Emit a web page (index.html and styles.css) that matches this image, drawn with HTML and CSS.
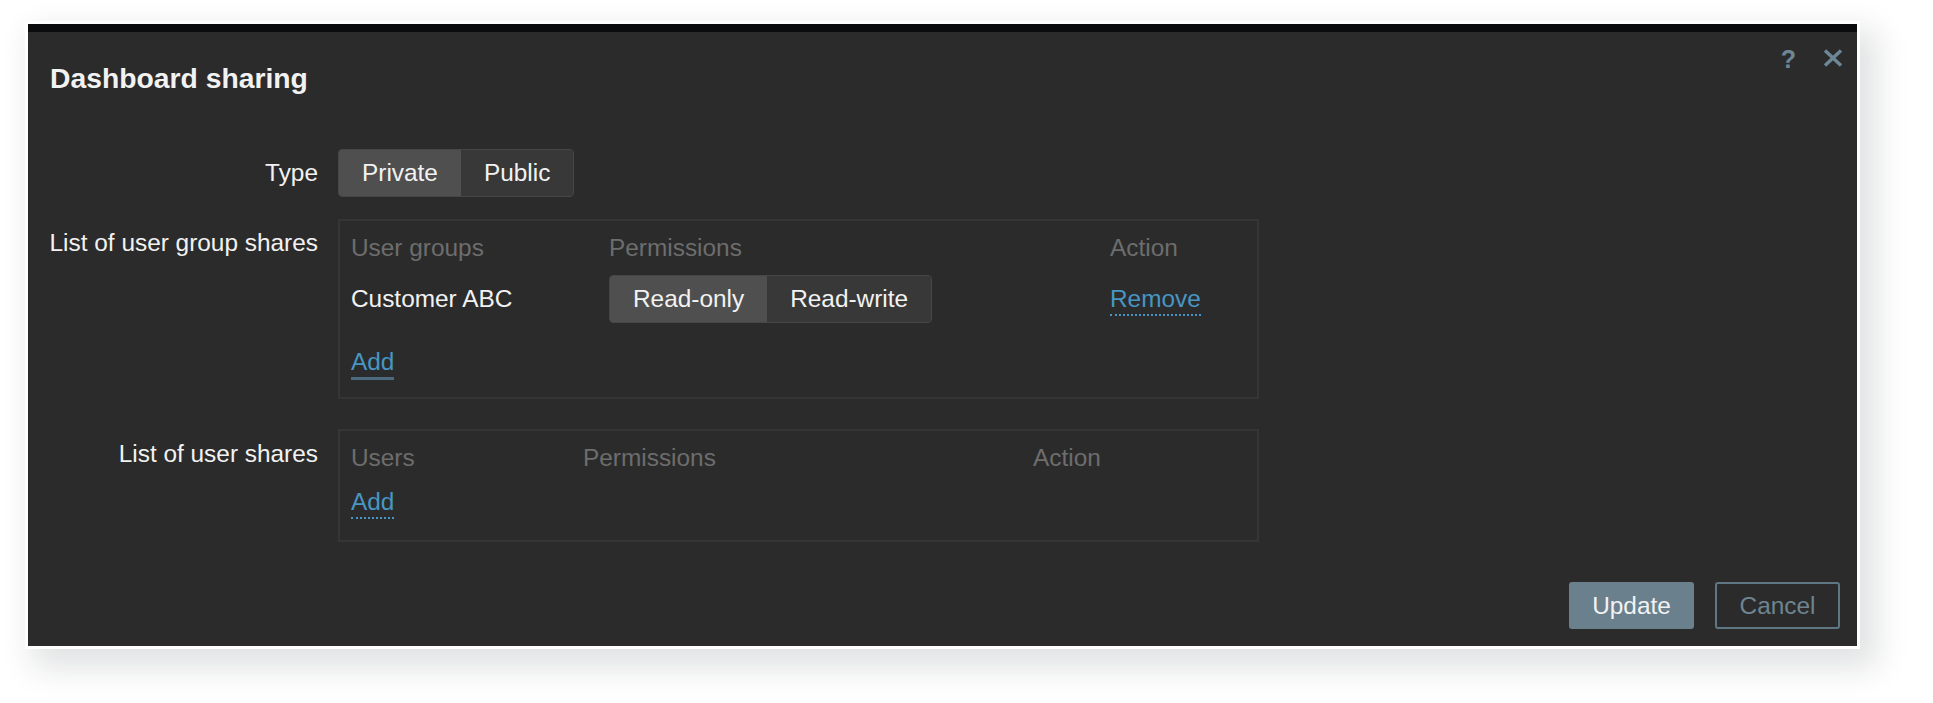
FILE: index.html
```html
<!DOCTYPE html>
<html lang="en">
<head>
<meta charset="utf-8">
<title>Dashboard sharing</title>
<link rel="stylesheet" href="styles.css">
</head>
<body>
<div class="dialog">
  <div class="head">
    <h4 class="title">Dashboard sharing</h4>
    <div class="tools">
      <span class="help">?</span>
      <svg class="close" width="20" height="18" viewBox="0 0 20 18" aria-label="Close">
        <path d="M2 1.5 L18 16.5 M18 1.5 L2 16.5" stroke="#6e8796" stroke-width="3.4" fill="none"/>
      </svg>
    </div>
  </div>

  <div class="form">
    <div class="row row-type">
      <div class="lbl lbl-center">Type</div>
      <div class="field">
        <div class="seg">
          <span class="seg-item on">Private</span><span class="seg-item">Public</span>
        </div>
      </div>
    </div>

    <div class="row row-groups">
      <div class="lbl lbl-top">List of user group shares</div>
      <div class="box box-groups">
        <div class="th">User groups</div>
        <div class="th">Permissions</div>
        <div class="th">Action</div>
        <div class="td td-mid">Customer ABC</div>
        <div class="td">
          <div class="seg">
            <span class="seg-item on">Read-only</span><span class="seg-item">Read-write</span>
          </div>
        </div>
        <div class="td td-mid"><a class="link dotted" href="#">Remove</a></div>
        <div class="td add-row"><a class="link solid" href="#">Add</a></div>
      </div>
    </div>

    <div class="row row-users">
      <div class="lbl lbl-top2">List of user shares</div>
      <div class="box box-users">
        <div class="th">Users</div>
        <div class="th">Permissions</div>
        <div class="th">Action</div>
        <div class="td add-row2"><a class="link dotted" href="#">Add</a></div>
      </div>
    </div>
  </div>

  <div class="footer">
    <button class="btn btn-primary" type="button">Update</button>
    <button class="btn btn-alt" type="button">Cancel</button>
  </div>
</div>
</body>
</html>
```

FILE: styles.css
```css
html, body {
  margin: 0;
  padding: 0;
  background: #ffffff;
}

body {
  font-family: "Liberation Sans", Arial, sans-serif;
  width: 1933px;
  height: 703px;
  overflow: hidden;
}

.dialog {
  margin: 24px 0 0 28px;
  width: 1829px;
  background: #2b2b2b;
  border-top: 8px solid #0b0c0d;
  box-shadow: 0 0 0 3px #ffffff, 12px 14px 30px 8px rgba(20, 30, 40, 0.13);
  color: #f2f2f2;
  font-size: 24.4px;
}

/* header */
.head {
  display: flex;
  align-items: flex-start;
  padding: 13px 14px 0 22px;
}

.title {
  margin: 17px 0 0;
  font-size: 28.3px;
  font-weight: bold;
  line-height: 32px;
  color: #f2f2f2;
}

.tools {
  margin-left: auto;
  display: flex;
  align-items: flex-start;
}

.help {
  font-size: 25px;
  font-weight: bold;
  line-height: 28px;
  color: #6e8796;
}

.close {
  display: block;
  margin: 4px 0 0 27px;
}

/* form */
.form {
  margin-top: 55px;
  padding-left: 10px;
}

.row {
  display: grid;
  grid-template-columns: 280px 921px;
  column-gap: 20px;
}

.row-groups {
  margin-top: 22px;
}

.row-users {
  margin-top: 30px;
}

.lbl {
  text-align: right;
  line-height: 28px;
  white-space: nowrap;
  color: #f2f2f2;
}

.lbl-center {
  align-self: center;
}

.lbl-top {
  padding-top: 10px;
}

.lbl-top2 {
  padding-top: 11px;
}

/* segmented radio control */
.seg {
  display: inline-flex;
  height: 48px;
  box-sizing: border-box;
  border: 1px solid #474747;
  border-radius: 4px;
  overflow: hidden;
  background: #383838;
}

.seg-item {
  padding: 0 23px;
  line-height: 46px;
  color: #f2f2f2;
  background: #383838;
  text-align: center;
}

.seg-item.on {
  background: #4f4f4f;
}

/* share tables */
.box {
  box-sizing: border-box;
  border: 2px solid #353535;
  display: grid;
  align-content: start;
}

.box-groups {
  height: 180px;
  padding: 13px 11px 21px;
  grid-template-columns: 258px 501px auto;
}

.box-users {
  height: 113px;
  padding: 13px 11px 24px;
  grid-template-columns: 232px 450px auto;
}

.th {
  line-height: 28px;
  color: #6d6d6d;
}

.box-groups .th {
  margin-bottom: 13px;
}

.td {
  line-height: 28px;
  color: #f2f2f2;
}

.td-mid {
  align-self: center;
}

.add-row {
  grid-column: 1 / -1;
  margin-top: 25px;
}

.add-row2 {
  grid-column: 1 / -1;
  margin-top: 16px;
}

.link {
  color: #4796c4;
  text-decoration: none;
  padding-bottom: 2px;
}

.link.dotted {
  border-bottom: 2px dotted #4796c4;
}

.link.solid {
  border-bottom: 3px solid #4b6a7d;
}

/* footer */
.footer {
  display: flex;
  justify-content: flex-end;
  gap: 21px;
  margin-top: 40px;
  padding: 0 17px 17px;
}

.btn {
  font: inherit;
  font-size: 24.4px;
  width: 125px;
  height: 47px;
  box-sizing: border-box;
  border-radius: 3px;
  padding: 0;
  line-height: 43px;
  text-align: center;
  cursor: pointer;
}

.btn-primary {
  background: #6a808d;
  border: 2px solid #6a808d;
  color: #f2f2f2;
}

.btn-alt {
  background: transparent;
  border: 2px solid #5f7683;
  color: #6e8591;
}
```
